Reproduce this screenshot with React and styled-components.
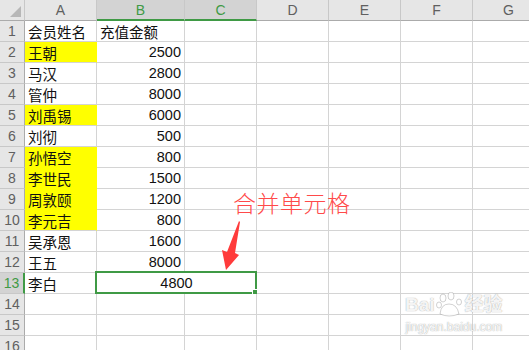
import React from "react";
import styled, { createGlobalStyle } from "styled-components";

const GlobalStyle = createGlobalStyle`
  html, body {
    margin: 0;
    padding: 0;
    background: #fff;
    overflow: hidden;
  }
  body {
    font-family: "Liberation Sans", "Noto Sans CJK SC", sans-serif;
  }
`;

const columns = ["A", "B", "C", "D", "E", "F", "G"];
const widths = [72, 88, 72, 72, 72, 72, 72];

const rows = [
  { name: "会员姓名", amount: "充值金额", header: true },
  { name: "王朝", amount: "2500", yellow: true },
  { name: "马汉", amount: "2800" },
  { name: "管仲", amount: "8000" },
  { name: "刘禹锡", amount: "6000", yellow: true },
  { name: "刘彻", amount: "500" },
  { name: "孙悟空", amount: "800", yellow: true },
  { name: "李世民", amount: "1500", yellow: true },
  { name: "周敦颐", amount: "1200", yellow: true },
  { name: "李元吉", amount: "800", yellow: true },
  { name: "吴承恩", amount: "1600" },
  { name: "王五", amount: "8000" },
  { name: "李白", amount: "4800", merged: true },
  {},
  {},
  {},
];

const Page = styled.div`
  position: relative;
  width: 529px;
  height: 350px;
  overflow: hidden;
`;

const Sheet = styled.div`
  display: grid;
  grid-template-columns: 25px ${widths.map((w) => `${w}px`).join(" ")};
  grid-auto-rows: 21px;
`;

const Corner = styled.div`
  position: relative;
  background: #e6e6e6;
  border-right: 1px solid #c8c8c8;
  border-bottom: 1px solid #ababab;
  box-sizing: border-box;
  &::after {
    content: "";
    position: absolute;
    right: 3px;
    bottom: 3px;
    border-left: 11px solid transparent;
    border-bottom: 11px solid #b7b7b7;
  }
`;

const ColHead = styled.div`
  display: flex;
  align-items: center;
  justify-content: center;
  box-sizing: border-box;
  background: ${(p) => (p.$active ? "#d3d3d3" : "#e6e6e6")};
  border-right: 1px solid #c8c8c8;
  border-bottom: ${(p) => (p.$active ? "2px solid #3f9a45" : "1px solid #ababab")};
  color: ${(p) => (p.$active ? "#3f9a45" : "#606060")};
  font-size: 14px;
  padding-top: ${(p) => (p.$active ? "1px" : "0")};
`;

const RowHead = styled.div`
  display: flex;
  align-items: center;
  justify-content: center;
  box-sizing: border-box;
  background: ${(p) => (p.$active ? "#d3d3d3" : "#e6e6e6")};
  border-right: ${(p) => (p.$active ? "2px solid #3f9a45" : "1px solid #ababab")};
  border-bottom: 1px solid #c8c8c8;
  color: ${(p) => (p.$active ? "#3f9a45" : "#606060")};
  font-size: 14px;
`;

const Cell = styled.div`
  position: relative;
  display: flex;
  align-items: center;
  justify-content: ${(p) => p.$align || "flex-start"};
  box-sizing: border-box;
  padding: 0 3px;
  background: ${(p) => (p.$yellow ? "#ffff00" : "#fff")};
  border-right: 1px solid ${(p) => (p.$yellow ? "#ffff00" : "#d4d4d4")};
  border-bottom: 1px solid ${(p) => (p.$yellow && p.$joinNext ? "#ffff00" : "#d4d4d4")};
  font-size: 14.5px;
  color: #111;
  white-space: nowrap;
  grid-column: ${(p) => (p.$span ? `span ${p.$span}` : "auto")};
`;

const Selection = styled.div`
  position: absolute;
  left: -2px;
  top: -2px;
  right: -1px;
  bottom: -1px;
  border: 2px solid #3f9a45;
  pointer-events: none;
`;

const FillHandle = styled.div`
  position: absolute;
  right: -4px;
  bottom: -4px;
  width: 5px;
  height: 5px;
  background: #3f9a45;
  border: 1px solid #fff;
`;

const Note = styled.div`
  position: absolute;
  left: 233px;
  top: 185px;
  font-family: "Noto Sans CJK SC", sans-serif;
  font-weight: 300;
  font-size: 23px;
  letter-spacing: 0.5px;
  color: #ff4a4a;
`;

const Arrow = styled.svg`
  position: absolute;
  left: 218px;
  top: 218px;
`;

const Watermark = styled.div`
  position: absolute;
  left: 405px;
  top: 292px;
  display: flex;
  flex-direction: column;
  align-items: center;
  color: rgba(255, 255, 255, 0.9);
  text-shadow: 0 0 1px rgba(150, 150, 150, 0.6), 0 0 1px rgba(150, 150, 150, 0.6);
  font-family: "Liberation Sans", "Noto Sans CJK SC", sans-serif;
`;

const MarkTop = styled.div`
  display: flex;
  align-items: center;
  font-size: 19px;
  font-weight: bold;
  line-height: 20px;
`;

const MarkSub = styled.div`
  font-size: 12px;
  line-height: 14px;
  margin-top: 2px;
`;

const App = () => {
  return (
    <Page>
      <GlobalStyle />
      <Sheet>
        <Corner />
        {columns.map((c, i) => (
          <ColHead key={c} $active={i === 1 || i === 2}>
            {c}
          </ColHead>
        ))}
        {rows.map((r, i) => {
          const next = rows[i + 1] || {};
          return (
            <React.Fragment key={i}>
              <RowHead $active={r.merged}>{i + 1}</RowHead>
              <Cell $yellow={r.yellow} $joinNext={r.yellow && next.yellow}>
                {r.name}
              </Cell>
              {r.merged ? (
                <Cell $span={2} $align="center">
                  {r.amount}
                  <Selection>
                    <FillHandle />
                  </Selection>
                </Cell>
              ) : (
                <>
                  <Cell $align={r.header ? "flex-start" : "flex-end"}>{r.amount}</Cell>
                  <Cell />
                </>
              )}
              <Cell />
              <Cell />
              <Cell />
              <Cell />
            </React.Fragment>
          );
        })}
      </Sheet>

      <Note>合并单元格</Note>
      <Arrow width="30" height="56" viewBox="0 0 30 56">
        <path d="M21 3 L22 4 L17 35 L21 37 L8 52 L4 32 L9 34 Z" fill="#ff3b3b" />
      </Arrow>

      <Watermark>
        <MarkTop>
          Bai
          <svg width="30" height="26" viewBox="0 0 30 26">
            <g fill="rgba(255,255,255,0.9)" stroke="rgba(150,150,150,0.55)" strokeWidth="0.8">
              <ellipse cx="8" cy="6" rx="3" ry="4" />
              <ellipse cx="16" cy="4" rx="3" ry="4" />
              <ellipse cx="4" cy="13" rx="2.5" ry="3" />
              <ellipse cx="24" cy="10" rx="2.5" ry="3" />
              <path d="M5 22 Q6 12 14 12 Q22 12 24 22 Q14 26 5 22 Z" />
            </g>
          </svg>
          经验
        </MarkTop>
        <MarkSub>jingyan.baidu.com</MarkSub>
      </Watermark>
    </Page>
  );
};

export default App;
